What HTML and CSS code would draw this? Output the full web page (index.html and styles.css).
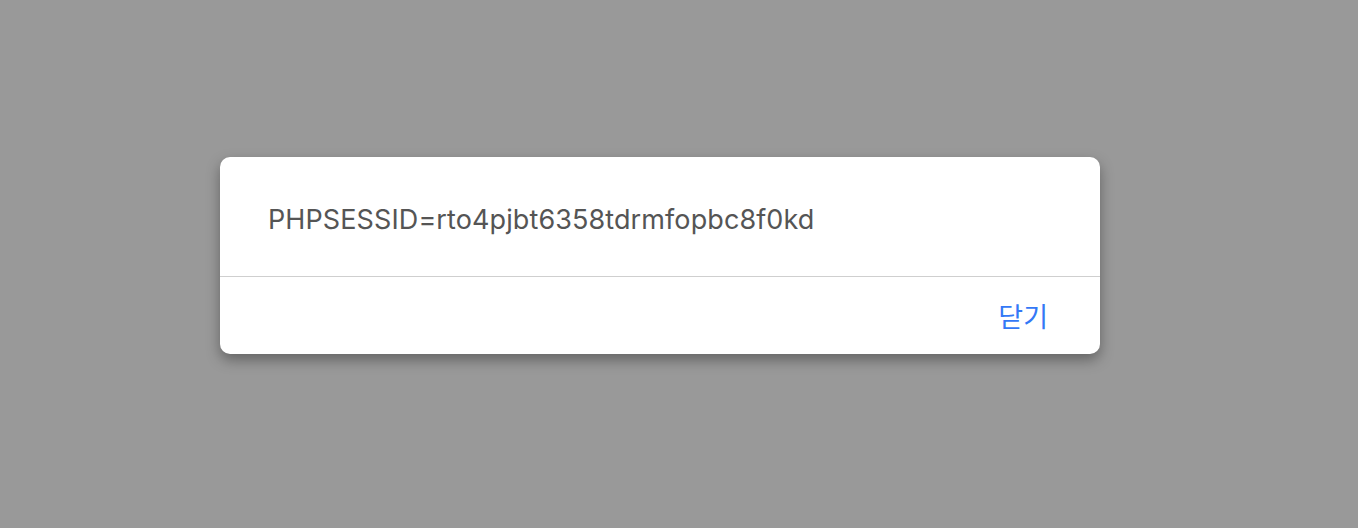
FILE: index.html
```html
<!DOCTYPE html>
<html lang="ko">
<head>
    <meta charset="UTF-8">
    <meta name="viewport" content="width=device-width, initial-scale=1.0">
    <title>Alert</title>
    <link rel="stylesheet" href="styles.css">
</head>
<body>
    <div class="dialog">
        <div class="message">PHPSESSID=rto4pjbt6358tdrmfopbc8f0kd</div>
        <div class="actions">
            <button type="button" class="close">닫기</button>
        </div>
    </div>
</body>
</html>
```

FILE: styles.css
```css
* {
    margin: 0;
    padding: 0;
    box-sizing: border-box;
}

body {
    background-color: #999999;
    width: 1358px;
    height: 528px;
    overflow: hidden;
    padding-top: 157px;
    padding-left: 220px;
    font-family: Inter, "Noto Sans CJK KR", sans-serif;
}

.dialog {
    width: 880px;
    background-color: #fff;
    border-radius: 10px;
    box-shadow: 0 6px 14px rgba(0, 0, 0, .35);
    overflow: hidden;
}

.message {
    height: 120px;
    border-bottom: 1px solid #cfcfcf;
    padding: 5px 48px 0;
    display: flex;
    align-items: center;
    font-size: 27px;
    color: #555;
    letter-spacing: 0.1px;
}

.actions {
    height: 77px;
    display: flex;
    justify-content: flex-end;
    align-items: center;
    padding-right: 52px;
}

.close {
    border: none;
    background: none;
    font-family: "Noto Sans CJK KR", sans-serif;
    font-size: 27px;
    color: #3478f6;
}
```
